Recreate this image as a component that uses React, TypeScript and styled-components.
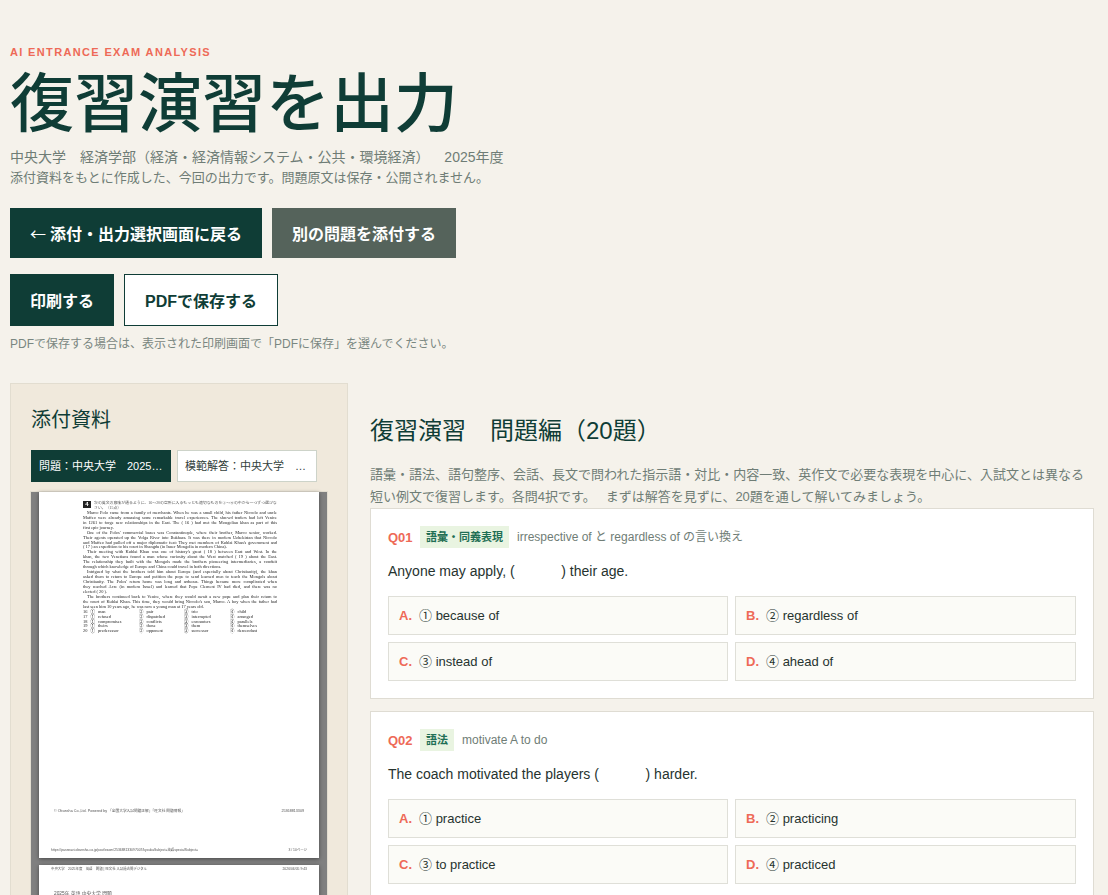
import React from "react";
import styled, { createGlobalStyle } from "styled-components";

const Global = createGlobalStyle`
  html, body { margin: 0; padding: 0; background: #f5f2eb; overflow: hidden; }
  body { font-family: "Liberation Sans", "Noto Sans CJK JP", sans-serif; }
  * { box-sizing: border-box; }
`;

const Page = styled.div`
  width: 1108px;
  height: 895px;
  overflow: hidden;
  padding: 46px 14px 0 10px;
  background: #f5f2eb;
`;
const Eyebrow = styled.div`
  font-size: 11px;
  line-height: 13px;
  font-weight: 700;
  letter-spacing: 1.35px;
  color: #ee6a57;
`;
const Title = styled.h1`
  margin: 7px 0 0;
  font-size: 64px;
  line-height: 76px;
  font-weight: 500;
  color: #0f3d36;
`;
const Meta = styled.div`
  margin-top: 5px;
  font-size: 14px;
  line-height: 20px;
  color: #6f7d76;
`;
const Lead = styled.p`
  margin: 1px 0 0;
  font-size: 13px;
  line-height: 20px;
  color: #6f7d76;
`;
const ButtonRow = styled.div<{ $top: number }>`
  display: flex;
  gap: 10px;
  margin-top: ${(p) => p.$top}px;
`;
const Btn = styled.button<{ $variant?: "dark" | "gray" | "light"; $h: number }>`
  height: ${(p) => p.$h}px;
  padding: 0 20px;
  border: ${(p) => (p.$variant === "light" ? "1px solid #0f3d36" : "0")};
  border-radius: 0;
  background: ${(p) => (p.$variant === "gray" ? "#55635b" : p.$variant === "light" ? "#fff" : "#0f3d36")};
  color: ${(p) => (p.$variant === "light" ? "#0f3d36" : "#fff")};
  font: 700 16px "Liberation Sans", "Noto Sans CJK JP", sans-serif;
  white-space: nowrap;
`;
const Arrow = styled.span`
  font-family: "Noto Sans CJK JP", sans-serif;
  font-weight: 400;
  margin-right: 4px;
`;
const Note = styled.p`
  margin: 9px 0 0;
  font-size: 12px;
  line-height: 18px;
  color: #7a8781;
`;
const Workspace = styled.div`
  display: grid;
  grid-template-columns: 338px 724px;
  column-gap: 22px;
  margin-top: 30px;
  align-items: start;
`;
const Side = styled.aside`
  height: 700px;
  background: #f0e9dc;
  border: 1px solid #e2ddd0;
  padding: 22px 20px 0;
`;
const SideTitle = styled.h2`
  margin: 0;
  font-size: 20px;
  line-height: 28px;
  font-weight: 400;
  color: #0f3d36;
`;
const Tabs = styled.div`
  display: flex;
  gap: 6px;
  margin-top: 16px;
`;
const Tab = styled.div<{ $active?: boolean }>`
  width: 140px;
  height: 32px;
  padding: 0 7px;
  line-height: 30px;
  font-size: 11px;
  border: 1px solid ${(p) => (p.$active ? "#0f3d36" : "#cdd3c9")};
  background: ${(p) => (p.$active ? "#0f3d36" : "#fff")};
  color: ${(p) => (p.$active ? "#fff" : "#33413c")};
  white-space: nowrap;
  overflow: hidden;
  text-overflow: ellipsis;
`;
const Viewer = styled.div`
  width: 296px;
  height: 600px;
  margin-top: 10px;
  padding: 0 8px;
  background: #808080;
  box-shadow: 0 0 0 1px #e2ddd0;
  display: flex;
  flex-direction: column;
  gap: 7px;
`;
const Sheet = styled.div<{ $grow?: boolean }>`
  flex: none;
  width: 280px;
  height: ${(p) => (p.$grow ? 200 : 366)}px;
  padding-bottom: ${(p) => (p.$grow ? 0 : 5)}px;
  background: #fff;
  box-shadow: 0 1px 4px rgba(0, 0, 0, 0.45);
  display: flex;
  flex-direction: column;
  font-family: "Liberation Serif", "Noto Sans CJK JP", serif;
  color: #1c1c1c;
  filter: blur(0.3px);
`;
const Exam = styled.div`
  margin: 9px 0 0 44px;
  width: 194px;
  font-size: 4.4px;
  line-height: 4.93px;
`;
const Instruction = styled.div`
  display: flex;
  gap: 3px;
  color: #555;
  font-size: 3.9px;
`;
const Num = styled.span`
  flex: none;
  width: 8px;
  height: 7px;
  background: #222;
  color: #fff;
  font: 700 6px/7px "Liberation Sans", sans-serif;
  text-align: center;
`;
const ExamLine = styled.div<{ $end?: boolean; $in?: boolean }>`
  white-space: nowrap;
  text-align: justify;
  text-align-last: ${(p) => (p.$end ? "left" : "justify")};
  ${(p) => (p.$in ? "text-indent: 4px;" : "")}
`;
const ChoiceGrid = styled.div`
  display: grid;
  grid-template-columns: 56px 45px 46px 1fr;
  word-spacing: 2px;
`;
const Foot = styled.div<{ $top?: string; $size: number; $pad?: number }>`
  margin-top: ${(p) => p.$top ?? "0"};
  padding: 0 ${(p) => p.$pad ?? 15}px;
  display: flex;
  justify-content: space-between;
  font: ${(p) => p.$size}px/6px "Liberation Sans", "Noto Sans CJK JP", sans-serif;
  color: #555;
  white-space: nowrap;
`;
const Main = styled.main``;
const MainTitle = styled.h2`
  margin: 31px 0 0;
  font-size: 24px;
  line-height: 34px;
  font-weight: 400;
  color: #0f3d36;
`;
const Intro = styled.p`
  margin: 16px 0 0;
  font-size: 13px;
  line-height: 22px;
  color: #6f7d76;
`;
const Card = styled.section`
  background: #fff;
  border: 1px solid #dfdcd3;
  padding: 17px 17px 17px;
  margin-bottom: 12px;
`;
const QHead = styled.div`
  display: flex;
  align-items: center;
  gap: 8px;
  height: 22px;
`;
const QNo = styled.span`
  flex: none;
  width: 24px;
  font-size: 13px;
  font-weight: 700;
  white-space: nowrap;
  color: #ee6a57;
`;
const Chip = styled.span`
  height: 22px;
  padding: 0 6px;
  line-height: 22px;
  font-size: 11px;
  font-weight: 700;
  background: #e9f4e1;
  color: #1f6f55;
`;
const Hint = styled.span`
  font-size: 12px;
  line-height: 1;
  color: #6f7d76;
`;
const Stem = styled.p`
  margin: 13px 0 0;
  font-size: 14px;
  line-height: 20px;
  color: #26332f;
  white-space: pre;
`;
const Options = styled.div`
  display: grid;
  grid-template-columns: 340px 341px;
  gap: 7px;
  margin-top: 15px;
`;
const Option = styled.div`
  height: 39px;
  padding: 0 10px;
  line-height: 38px;
  background: #fbfbf7;
  border: 1px solid #dfdfd8;
  font-size: 13px;
  color: #26332f;
`;
const Letter = styled.b`
  margin-right: 7px;
  color: #ee6a57;
`;

const passage: [string, boolean?, boolean?][] = [
  ["Marco Polo came from a family of merchants. When he was a small child, his father Niccolo and uncle", false, true],
  ["Maffeo were already amassing some remarkable travel experiences. The shrewd traders had left Venice"],
  ["in 1261 to forge new relationships in the East. The ( 16 ) had met the Mongolian khan as part of this"],
  ["first epic journey.", true],
  ["One of the Polos' commercial bases was Constantinople, where their brother, Marco senior, worked.", false, true],
  ["Their agents operated up the Volga River into Bukhara. It was there in modern Uzbekistan that Niccolo"],
  ["and Maffeo had pulled off a major diplomatic feat: They met members of Kublai Khan's government and"],
  ["( 17 ) an expedition to his court in Shangdu (in Inner Mongolia in modern China).", true],
  ["Their meeting with Kublai Khan was one of history's great ( 18 ) between East and West. In the", false, true],
  ["khan, the two Venetians found a man whose curiosity about the West matched ( 19 ) about the East."],
  ["The relationship they built with the Mongols made the brothers pioneering intermediaries, a conduit"],
  ["through which knowledge of Europe and China could travel in both directions.", true],
  ["Intrigued by what the brothers told him about Europe (and especially about Christianity), the khan", false, true],
  ["asked them to return to Europe and petition the pope to send learned men to teach the Mongols about"],
  ["Christianity. The Polos' return home was long and arduous. Things became more complicated when"],
  ["they reached Acre (in modern Israel) and learned that Pope Clement IV had died, and there was no"],
  ["elected ( 20 ).", true],
  ["The brothers continued back to Venice, where they would await a new pope and plan their return to", false, true],
  ["the court of Kublai Khan. This time, they would bring Niccolo's son, Marco. A boy when the father had"],
  ["last seen him 10 years ago, he was now a young man at 17 years old.", true],
];
const choices = [
  ["16 ① man", "② pair", "③ trio", "④ child"],
  ["17 ① refused", "② dispatched", "③ interrupted", "④ arranged"],
  ["18 ① compromises", "② conflicts", "③ encounters", "④ parallels"],
  ["19 ① theirs", "② those", "③ them", "④ themselves"],
  ["20 ① predecessor", "② opponent", "③ successor", "④ descendant"],
];

const questions = [
  {
    no: "Q01", tag: "語彙・同義表現", hint: "irrespective of と regardless of の言い換え",
    stem: "Anyone may apply, (            ) their age.",
    opts: ["① because of", "② regardless of", "③ instead of", "④ ahead of"],
  },
  {
    no: "Q02", tag: "語法", hint: "motivate A to do",
    stem: "The coach motivated the players (            ) harder.",
    opts: ["① practice", "② practicing", "③ to practice", "④ practiced"],
  },
];

export default function App() {
  return (
    <Page>
      <Global />
      <Eyebrow>AI ENTRANCE EXAM ANALYSIS</Eyebrow>
      <Title>復習演習を出力</Title>
      <Meta>中央大学　経済学部（経済・経済情報システム・公共・環境経済）　{"\u00a0\u00a0"}2025年度</Meta>
      <Lead>添付資料をもとに作成した、今回の出力です。問題原文は保存・公開されません。</Lead>
      <ButtonRow $top={20}>
        <Btn $h={50} $variant="dark"><Arrow>←</Arrow>添付・出力選択画面に戻る</Btn>
        <Btn $h={50} $variant="gray">別の問題を添付する</Btn>
      </ButtonRow>
      <ButtonRow $top={16}>
        <Btn $h={52} $variant="dark">印刷する</Btn>
        <Btn $h={52} $variant="light">PDFで保存する</Btn>
      </ButtonRow>
      <Note>PDFで保存する場合は、表示された印刷画面で「PDFに保存」を選んでください。</Note>
      <Workspace>
        <Side>
          <SideTitle>添付資料</SideTitle>
          <Tabs>
            <Tab $active>問題：中央大学　2025年度 英語 問題</Tab>
            <Tab>模範解答：中央大学　2025年度 英語</Tab>
          </Tabs>
          <Viewer>
            <Sheet>
              <Exam>
                <Instruction>
                  <Num>4</Num>
                  <span>次の英文の意味が通るように、16〜20の空所に入るもっとも適切なものを①〜④の中から一つずつ選びなさい。（15点）</span>
                </Instruction>
                {passage.map(([t, end, indent]) => (
                  <ExamLine key={t} $end={end} $in={indent}>{t}</ExamLine>
                ))}
                {choices.map((row) => (
                  <ChoiceGrid key={row[0]}>
                    {row.map((c) => <span key={c}>{c}</span>)}
                  </ChoiceGrid>
                ))}
              </Exam>
              <Foot $top="auto" $size={3.7}>
                <span>© Obunsha Co.,Ltd. Powered by 「全国大学入試問題正解」「旺文社 問題情報」</span>
                <span>25368813309</span>
              </Foot>
              <Foot $top="33px" $size={3.4} $pad={12}>
                <span>https://passnavi.obunsha.co.jp/past/exam/253688133097007/kyoukaSubject=英語specialSubject=</span>
                <span>3 / 10ページ</span>
              </Foot>
            </Sheet>
            <Sheet $grow>
              <Foot $top="1px" $size={3.4} $pad={12}>
                <span>中央大学　2025年度　英語　問題 | 旺文社 入試過去問デジタル</span>
                <span>2026/06/05 9:43</span>
              </Foot>
              <Foot $top="19px" $size={4.8}><span>2025年 英語 中央大学 問題</span></Foot>
            </Sheet>
          </Viewer>
        </Side>
        <Main>
          <MainTitle>復習演習　問題編（20題）</MainTitle>
          <Intro>
            語彙・語法、語句整序、会話、長文で問われた指示語・対比・内容一致、英作文で必要な表現を中心に、入試文とは異なる短い例文で復習します。各問4択です。　{"\u00a0"}まずは解答を見ずに、20題を通して解いてみましょう。
          </Intro>
          {questions.map((q) => (
            <Card key={q.no}>
              <QHead>
                <QNo>{q.no}</QNo>
                <Chip>{q.tag}</Chip>
                <Hint>{q.hint}</Hint>
              </QHead>
              <Stem>{q.stem}</Stem>
              <Options>
                {q.opts.map((o, i) => (
                  <Option key={o}>
                    <Letter>{"ABCD"[i]}.</Letter>
                    {o}
                  </Option>
                ))}
              </Options>
            </Card>
          ))}
        </Main>
      </Workspace>
    </Page>
  );
}
